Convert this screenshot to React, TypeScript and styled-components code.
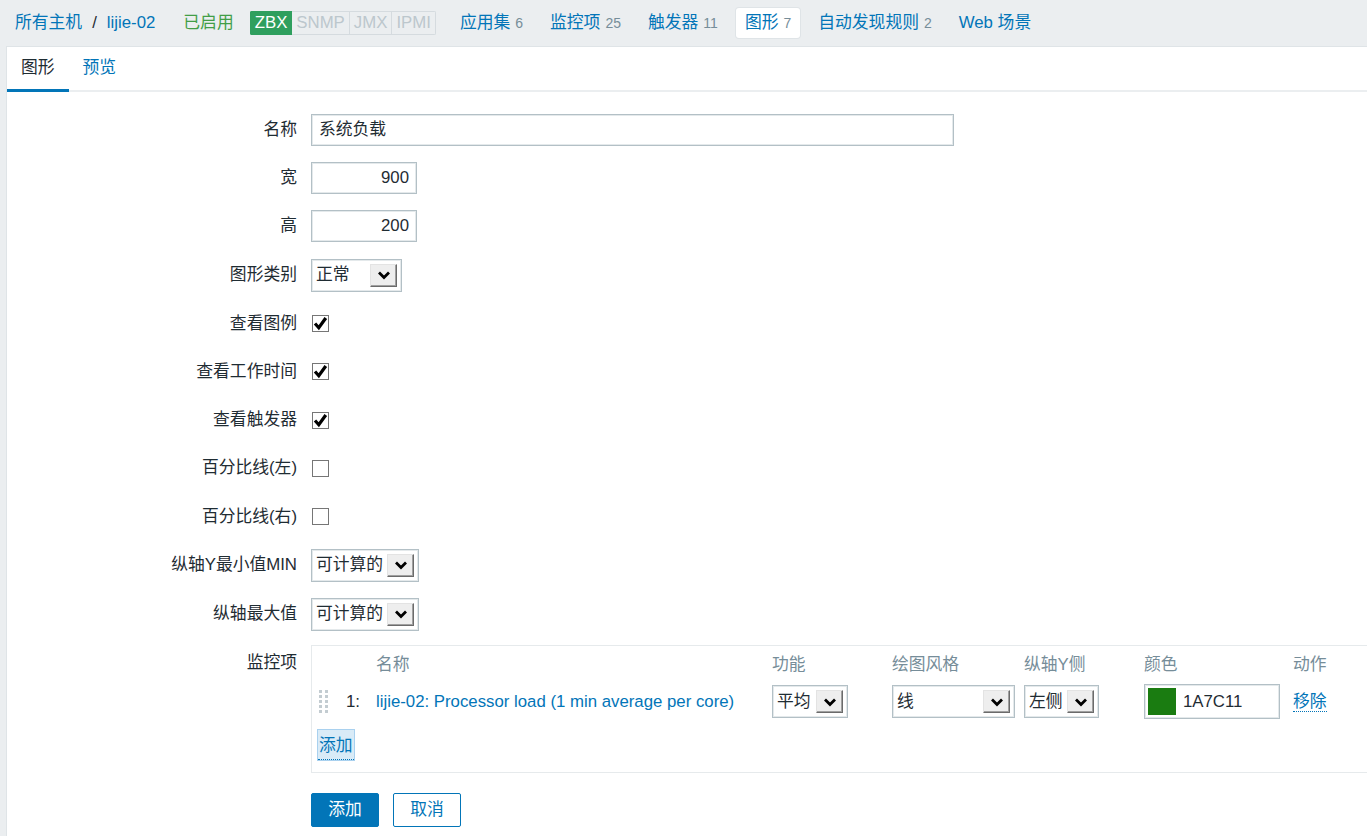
import styled, { createGlobalStyle } from 'styled-components';

const GlobalStyle = createGlobalStyle`
  html, body {
    margin: 0;
    padding: 0;
    overflow: hidden;
  }
  body {
    background: #ebeef0;
    color: #1f2c33;
    font-family: "Liberation Sans", "Noto Sans CJK SC", sans-serif;
    font-size: 16.8px;
    line-height: 20px;
  }
  * {
    box-sizing: border-box;
  }
`;

const Page = styled.div`
  display: flex;
  flex-direction: column;
  min-height: 100vh;
`;

const Header = styled.header`
  display: flex;
  align-items: center;
  height: 46px;
  padding-left: 15px;
`;

const Breadcrumb = styled.a`
  color: #0275b8;
  text-decoration: none;
`;

const Slash = styled.span`
  color: #1f2c33;
  margin: 0 10px;
`;

const Status = styled.span`
  color: #429e47;
  margin: 0 16px 0 28px;
`;

const BadgeGroup = styled.div`
  display: flex;
  height: 24px;
  margin-right: 6px;
  border-radius: 2px;
  overflow: hidden;
`;

const Badge = styled.span<{ $on?: boolean }>`
  display: flex;
  align-items: center;
  padding: 0 4px;
  color: ${p => (p.$on ? '#ffffff' : '#bcc7cd')};
  background: ${p => (p.$on ? '#2f9f5e' : '#ebeef0')};
  border: 1px solid ${p => (p.$on ? '#2f9f5e' : '#d5dbdf')};
  & + & {
    border-left: none;
  }
`;

const Nav = styled.nav`
  display: flex;
  gap: 9px;
  margin-left: 9px;
`;

const NavItem = styled.a<{ $active?: boolean }>`
  display: flex;
  align-items: baseline;
  gap: 5px;
  padding: 5px 9px;
  border-radius: 3px;
  color: #0275b8;
  text-decoration: none;
  white-space: nowrap;
  background: ${p => (p.$active ? '#ffffff' : 'transparent')};
  box-shadow: ${p => (p.$active ? '0 0 0 1px #dfe4e7' : 'none')};
`;

const Count = styled.span`
  color: #768d99;
  font-size: 14px;
`;

const Panel = styled.main`
  flex: 1;
  margin-left: 6px;
  background: #ffffff;
  border-top: 1px solid #dfe4e7;
  border-left: 1px solid #dfe4e7;
`;

const TabBar = styled.div`
  display: flex;
  height: 45px;
  border-bottom: 2px solid #ebeef0;
`;

const Tab = styled.a<{ $active?: boolean }>`
  display: flex;
  align-items: center;
  padding: 0 14px;
  margin-bottom: -2px;
  color: ${p => (p.$active ? '#1f2c33' : '#0275b8')};
  border-bottom: 3px solid ${p => (p.$active ? '#0275b8' : 'transparent')};
  text-decoration: none;
`;

const Form = styled.div`
  display: grid;
  grid-template-columns: 290px 1fr;
  column-gap: 14px;
  row-gap: 16.2px;
  padding-top: 22px;
`;

const Label = styled.div`
  display: flex;
  align-items: center;
  justify-content: flex-end;
  min-height: 32px;
  white-space: nowrap;
`;

const TopLabel = styled(Label)`
  align-items: flex-start;
  padding-top: 6px;
`;

const Field = styled.div`
  display: flex;
  align-items: center;
  min-height: 32px;
`;

const TextInput = styled.div<{ $width: number; $right?: boolean }>`
  display: flex;
  align-items: center;
  justify-content: ${p => (p.$right ? 'flex-end' : 'flex-start')};
  width: ${p => p.$width}px;
  height: 32px;
  padding: 0 7px;
  border: 1px solid #b3c0c6;
  box-shadow: inset 0 0 0 1px #e4e9eb;
  color: #1f2c33;
`;

const SelectBox = styled.div<{ $width: number }>`
  display: flex;
  align-items: center;
  justify-content: space-between;
  width: ${p => p.$width}px;
  height: 33px;
  padding: 0 4px;
  border: 1px solid #b3c0c6;
  box-shadow: inset 0 0 0 1px #e4e9eb;
  color: #1f2c33;
  white-space: nowrap;
`;

const ArrowButton = styled.span`
  display: flex;
  align-items: center;
  justify-content: center;
  width: 27px;
  height: 23px;
  background: #eeeeee;
  border: 1px solid;
  border-color: #e3e3e3 #6b6b6b #6b6b6b #e3e3e3;
  box-shadow: inset -1px -1px 0 #a0a0a0;
`;

const Checkbox = styled.span`
  display: flex;
  align-items: center;
  justify-content: center;
  width: 17px;
  height: 17px;
  margin-left: 1px;
  border: 1px solid #767676;
  background: #ffffff;
`;

const ItemsBox = styled.div`
  margin-top: -2px;
  margin-right: -2px;
  padding: 8px 0 12px 6px;
  border: 1px solid #e6eaec;
  border-right: none;
`;

const ItemsGrid = styled.div`
  display: grid;
  grid-template-columns: 24px 34px 396px 120px 132px 120px 149px 1fr;
  grid-template-rows: 22px 51px;
  align-items: center;
`;

const HeadCell = styled.div`
  color: #768d99;
  white-space: nowrap;
`;

const Num = styled.div`
  text-align: right;
  padding-right: 16px;
`;

const ItemLink = styled.a`
  color: #0275b8;
  text-decoration: none;
  white-space: nowrap;
`;

const Handle = styled.div`
  display: grid;
  grid-template-columns: 3px 3px;
  grid-auto-rows: 3px;
  gap: 2px 3px;
  margin-left: 1px;
  span {
    background: #c3ccd1;
  }
`;

const ColorInput = styled.div`
  display: flex;
  align-items: center;
  gap: 7px;
  width: 136px;
  height: 35px;
  padding: 0 3px;
  border: 1px solid #b3c0c6;
  box-shadow: inset 0 0 0 1px #e4e9eb;
`;

const Swatch = styled.span<{ $color: string }>`
  width: 28px;
  height: 27px;
  background: ${p => p.$color};
`;

const DottedLink = styled.a`
  color: #0275b8;
  text-decoration: none;
  border-bottom: 1px dotted #0275b8;
  line-height: 22px;
`;

const AddLink = styled(DottedLink)`
  display: inline-block;
  margin-top: 3px;
  padding: 5px 1px 2px;
  background: #d9ebf7;
  outline: 1px solid #a9d1ef;
`;

const Buttons = styled.div`
  display: flex;
  gap: 14px;
  padding-top: 4px;
`;

const Button = styled.button<{ $primary?: boolean }>`
  width: 68px;
  height: 34px;
  font: inherit;
  border-radius: 2px;
  cursor: pointer;
  color: ${p => (p.$primary ? '#ffffff' : '#0275b8')};
  background: ${p => (p.$primary ? '#0275b8' : '#ffffff')};
  border: 1px solid #0275b8;
`;

function Chevron() {
  return (
    <svg width="14" height="10" viewBox="0 0 14 10">
      <path d="M2 2.5 L7 7.5 L12 2.5" fill="none" stroke="#000" strokeWidth="2.8" />
    </svg>
  );
}

function Select({ value, width }: { value: string; width: number }) {
  return (
    <SelectBox $width={width}>
      <span>{value}</span>
      <ArrowButton>
        <Chevron />
      </ArrowButton>
    </SelectBox>
  );
}

function Check({ checked }: { checked?: boolean }) {
  return (
    <Checkbox>
      {checked && (
        <svg width="15" height="15" viewBox="0 0 15 15">
          <path d="M2 7.5 L5.8 11.8 L12.8 2" fill="none" stroke="#000" strokeWidth="3.2" />
        </svg>
      )}
    </Checkbox>
  );
}

const checks = [
  { label: '查看图例', checked: true },
  { label: '查看工作时间', checked: true },
  { label: '查看触发器', checked: true },
  { label: '百分比线(左)', checked: false },
  { label: '百分比线(右)', checked: false },
];

const navItems = [
  { name: '应用集', count: '6' },
  { name: '监控项', count: '25' },
  { name: '触发器', count: '11' },
  { name: '图形', count: '7', active: true },
  { name: '自动发现规则', count: '2' },
  { name: 'Web 场景', count: '' },
];

export default function App() {
  return (
    <Page>
      <GlobalStyle />
      <Header>
        <Breadcrumb>所有主机</Breadcrumb>
        <Slash>/</Slash>
        <Breadcrumb>lijie-02</Breadcrumb>
        <Status>已启用</Status>
        <BadgeGroup>
          <Badge $on>ZBX</Badge>
          <Badge>SNMP</Badge>
          <Badge>JMX</Badge>
          <Badge>IPMI</Badge>
        </BadgeGroup>
        <Nav>
          {navItems.map(item => (
            <NavItem key={item.name} $active={item.active}>
              {item.name}
              {item.count && <Count>{item.count}</Count>}
            </NavItem>
          ))}
        </Nav>
      </Header>

      <Panel>
        <TabBar>
          <Tab $active>图形</Tab>
          <Tab>预览</Tab>
        </TabBar>

        <Form>
          <Label>名称</Label>
          <Field>
            <TextInput $width={643}>系统负载</TextInput>
          </Field>

          <Label>宽</Label>
          <Field>
            <TextInput $width={106} $right>900</TextInput>
          </Field>

          <Label>高</Label>
          <Field>
            <TextInput $width={106} $right>200</TextInput>
          </Field>

          <Label>图形类别</Label>
          <Field>
            <Select value="正常" width={91} />
          </Field>

          {checks.flatMap(c => [
            <Label key={c.label + '-l'}>{c.label}</Label>,
            <Field key={c.label + '-f'}>
              <Check checked={c.checked} />
            </Field>,
          ])}

          <Label>纵轴Y最小值MIN</Label>
          <Field>
            <Select value="可计算的" width={108} />
          </Field>

          <Label>纵轴最大值</Label>
          <Field>
            <Select value="可计算的" width={108} />
          </Field>

          <TopLabel>监控项</TopLabel>
          <ItemsBox>
            <ItemsGrid>
              <div />
              <div />
              <HeadCell>名称</HeadCell>
              <HeadCell>功能</HeadCell>
              <HeadCell>绘图风格</HeadCell>
              <HeadCell>纵轴Y侧</HeadCell>
              <HeadCell>颜色</HeadCell>
              <HeadCell>动作</HeadCell>

              <Handle>
                {Array.from({ length: 10 }).map((_, i) => (
                  <span key={i} />
                ))}
              </Handle>
              <Num>1:</Num>
              <ItemLink>lijie-02: Processor load (1 min average per core)</ItemLink>
              <div>
                <Select value="平均" width={76} />
              </div>
              <div>
                <Select value="线" width={123} />
              </div>
              <div>
                <Select value="左侧" width={75} />
              </div>
              <div>
                <ColorInput>
                  <Swatch $color="#1A7C11" />
                  1A7C11
                </ColorInput>
              </div>
              <div>
                <DottedLink>移除</DottedLink>
              </div>
            </ItemsGrid>
            <AddLink>添加</AddLink>
          </ItemsBox>

          <div />
          <Buttons>
            <Button $primary>添加</Button>
            <Button>取消</Button>
          </Buttons>
        </Form>
      </Panel>
    </Page>
  );
}
